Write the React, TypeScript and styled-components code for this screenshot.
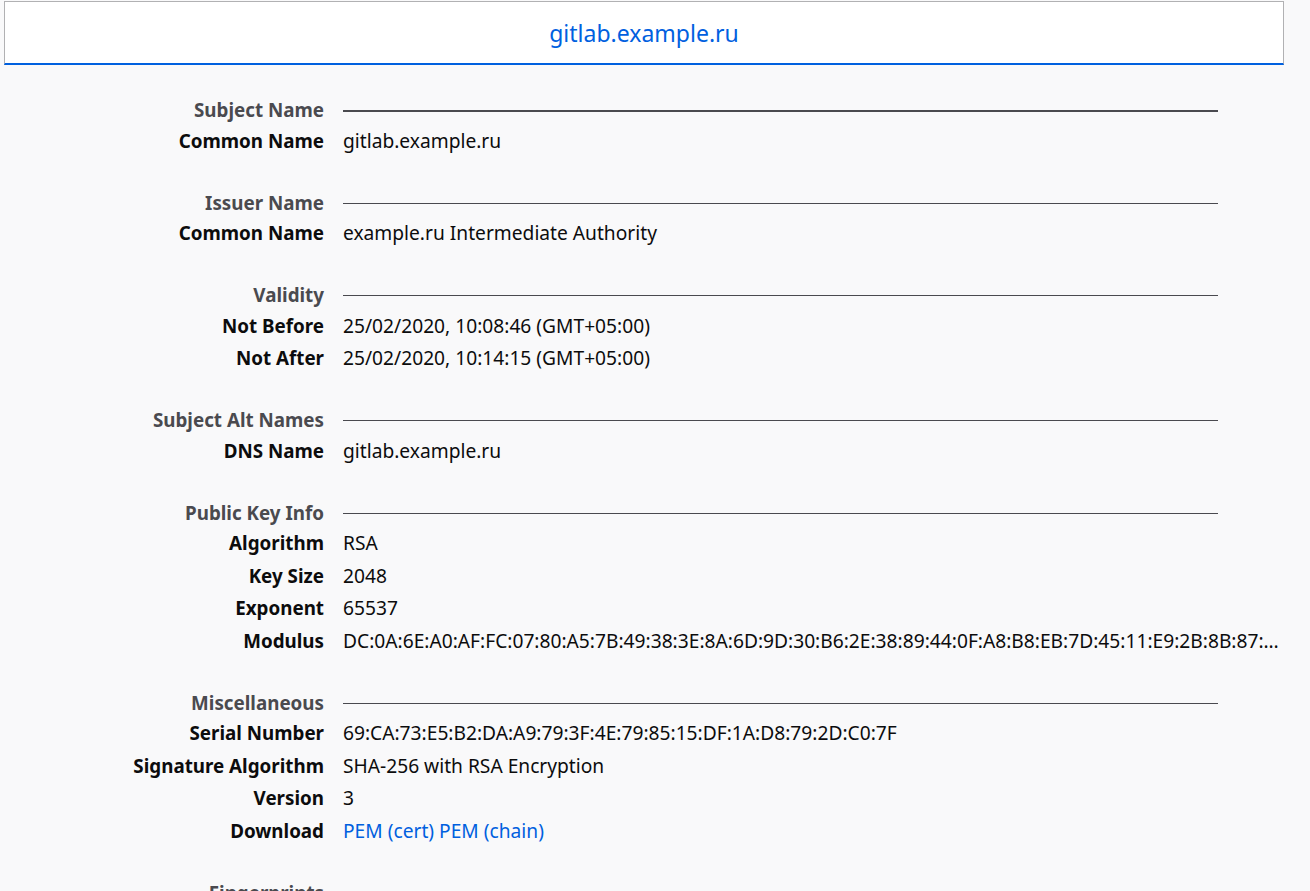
import React from 'react'
import styled, { createGlobalStyle } from 'styled-components'

const GlobalStyle = createGlobalStyle`
  html, body {
    margin: 0;
    padding: 0;
    background: #f9f9fa;
  }
  body {
    font-family: "Noto Sans", "Open Sans", sans-serif;
    color: #0c0c0d;
  }
`

const Page = styled.div`
  width: 1310px;
  height: 891px;
  overflow: hidden;
`

const TitleBar = styled.div`
  margin: 1px 0 0 4px;
  width: 1280px;
  height: 64px;
  box-sizing: border-box;
  background: #fff;
  border: 1px solid #b1b1b3;
  border-bottom: 2px solid #0060df;
  display: flex;
  align-items: center;
  justify-content: center;
`

const Title = styled.span`
  color: #0060df;
  font-size: 23px;
`

const Content = styled.div`
  padding-top: 32px;
  width: 1284px;
`

const Block = styled.section`
  display: grid;
  grid-template-columns: 324px minmax(0, 1fr);
  column-gap: 19px;
  margin-bottom: 32.5px;
`

const SectionLabel = styled.div`
  text-align: right;
  font-weight: 700;
  font-size: 18.8px;
  color: #4a4a4f;
  height: 27.5px;
  line-height: 27.5px;
  white-space: nowrap;
`

const Rule = styled.div<{ $thick?: boolean }>`
  align-self: center;
  margin-right: 66px;
  height: ${(p) => (p.$thick ? 2 : 1)}px;
  background: #4a4a4f;
`

const RowLabel = styled.div`
  text-align: right;
  font-weight: 700;
  font-size: 18.8px;
  line-height: 32.5px;
  white-space: nowrap;
`

const RowValue = styled.div<{ $clip?: boolean }>`
  font-size: 19.2px;
  line-height: 32.5px;
  white-space: nowrap;
  overflow: ${(p) => (p.$clip ? 'hidden' : 'visible')};
  text-overflow: ellipsis;
`

const Link = styled.a`
  color: #0060df;
  text-decoration: none;
`

type Row = { label: string; value: React.ReactNode; clip?: boolean }
type Section = { title: string; rows: Row[] }

const MODULUS =
  'DC:0A:6E:A0:AF:FC:07:80:A5:7B:49:38:3E:8A:6D:9D:30:B6:2E:38:89:44:0F:A8:B8:EB:7D:45:11:E9:2B:8B:87:5C:3A:91:0E:77:42:D8:6B:1F:C2:93:5E:04:AB:66:29:F1'

const sections: Section[] = [
  { title: 'Subject Name', rows: [{ label: 'Common Name', value: 'gitlab.example.ru' }] },
  { title: 'Issuer Name', rows: [{ label: 'Common Name', value: 'example.ru Intermediate Authority' }] },
  {
    title: 'Validity',
    rows: [
      { label: 'Not Before', value: '25/02/2020, 10:08:46 (GMT+05:00)' },
      { label: 'Not After', value: '25/02/2020, 10:14:15 (GMT+05:00)' },
    ],
  },
  { title: 'Subject Alt Names', rows: [{ label: 'DNS Name', value: 'gitlab.example.ru' }] },
  {
    title: 'Public Key Info',
    rows: [
      { label: 'Algorithm', value: 'RSA' },
      { label: 'Key Size', value: '2048' },
      { label: 'Exponent', value: '65537' },
      { label: 'Modulus', value: MODULUS, clip: true },
    ],
  },
  {
    title: 'Miscellaneous',
    rows: [
      { label: 'Serial Number', value: '69:CA:73:E5:B2:DA:A9:79:3F:4E:79:85:15:DF:1A:D8:79:2D:C0:7F' },
      { label: 'Signature Algorithm', value: 'SHA-256 with RSA Encryption' },
      { label: 'Version', value: '3' },
      {
        label: 'Download',
        value: (
          <>
            <Link href="#">PEM (cert)</Link> <Link href="#">PEM (chain)</Link>
          </>
        ),
      },
    ],
  },
  {
    title: 'Fingerprints',
    rows: [
      { label: 'SHA-256', value: '4B:1E:90:3C:A2:77:D5:08:6F:E1:2A:93:C4:5D:B0:11:7E:62:F8:0D:39:AC:54:E7:21:9B:C6:03:8F:4A:DD:72', clip: true },
      { label: 'SHA-1', value: '7A:02:CD:58:1B:E4:93:6F:20:A1:8C:D7:45:3B:9E:F0:62:14:BB:C9' },
    ],
  },
]

export default function App() {
  return (
    <>
      <GlobalStyle />
      <Page>
        <TitleBar>
          <Title>gitlab.example.ru</Title>
        </TitleBar>
        <Content>
          {sections.map((s, i) => (
            <Block key={s.title}>
              <SectionLabel>{s.title}</SectionLabel>
              <Rule $thick={i === 0} />
              {s.rows.map((r) => (
                <React.Fragment key={r.label}>
                  <RowLabel>{r.label}</RowLabel>
                  <RowValue $clip={r.clip}>{r.value}</RowValue>
                </React.Fragment>
              ))}
            </Block>
          ))}
        </Content>
      </Page>
    </>
  )
}
